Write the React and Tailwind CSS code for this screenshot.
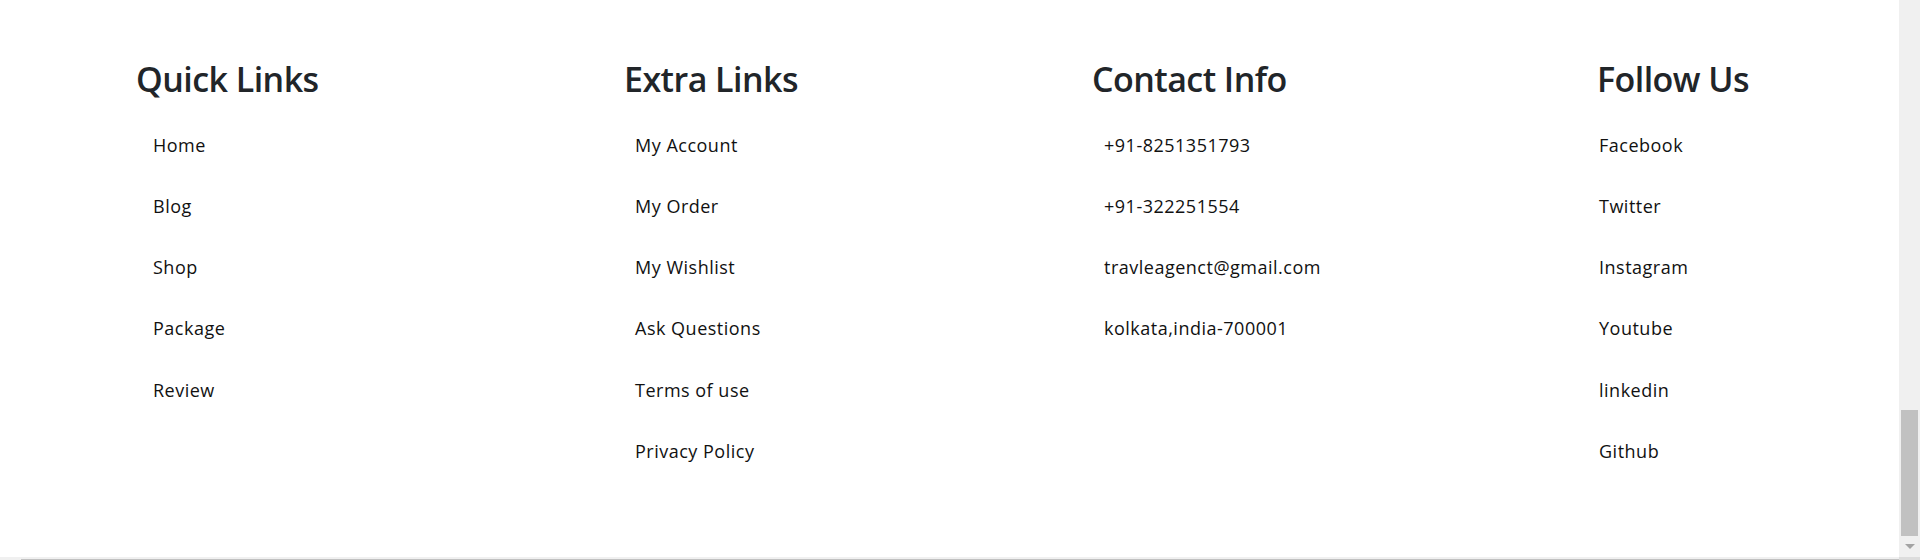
import React from "react";

const columns = [
  {
    title: "Quick Links",
    inset: "pl-[17px]",
    items: ["Home", "Blog", "Shop", "Package", "Review"],
  },
  {
    title: "Extra Links",
    inset: "pl-[11px]",
    items: ["My Account", "My Order", "My Wishlist", "Ask Questions", "Terms of use", "Privacy Policy"],
  },
  {
    title: "Contact Info",
    inset: "pl-[12px]",
    items: ["+91-8251351793", "+91-322251554", "travleagenct@gmail.com", "kolkata,india-700001"],
  },
  {
    title: "Follow Us",
    inset: "pl-[2px]",
    items: ["Facebook", "Twitter", "Instagram", "Youtube", "linkedin", "Github"],
  },
];

const FooterColumn = ({ title, inset, items }) => (
  <div className="flex flex-col">
    <h2 className="text-[34px] leading-[1.2] font-semibold text-[#212529] tracking-[-0.55px]">{title}</h2>
    <ul className={`mt-[32.4px] flex flex-col gap-[34.1px] ${inset}`}>
      {items.map((item) => (
        <li key={item}>
          <a href="#" className="text-[18px] leading-[27px] text-[#111] tracking-[0.5px]">
            {item}
          </a>
        </li>
      ))}
    </ul>
  </div>
);

export default function App() {
  return (
    <div
      className="w-[1920px] h-[560px] flex bg-white overflow-hidden"
      style={{ fontFamily: '"Open Sans", "Noto Sans", sans-serif' }}
    >
      <div className="flex-1 flex flex-col">
        <footer className="flex-1 grid grid-cols-[488px_468px_505px_auto] pl-[136px] pt-[59px]">
          {columns.map((col) => (
            <FooterColumn key={col.title} {...col} />
          ))}
        </footer>
        {/* horizontal scrollbar peeking in at the bottom */}
        <div className="h-[3px] flex bg-[#f0f0f0]">
          <div className="w-[21px]" />
          <div className="flex-1 flex flex-col">
            <div className="h-[2px]" />
            <div className="flex-1 bg-[#c1c1c1]" />
          </div>
        </div>
      </div>

      {/* vertical scrollbar */}
      <div className="w-[21px] flex flex-col bg-[#f0f0f0]">
        <div className="flex-1" />
        <div className="h-[126px] mx-[2px] bg-[#c1c1c1]" />
        <div className="h-[21px] flex items-center justify-center">
          <svg width="10" height="6" viewBox="0 0 10 6">
            <path d="M0 0H10L5 5Z" fill="#a3a3a3" />
          </svg>
        </div>
        <div className="h-[3px] bg-[#dcdcdc]" />
      </div>
    </div>
  );
}
